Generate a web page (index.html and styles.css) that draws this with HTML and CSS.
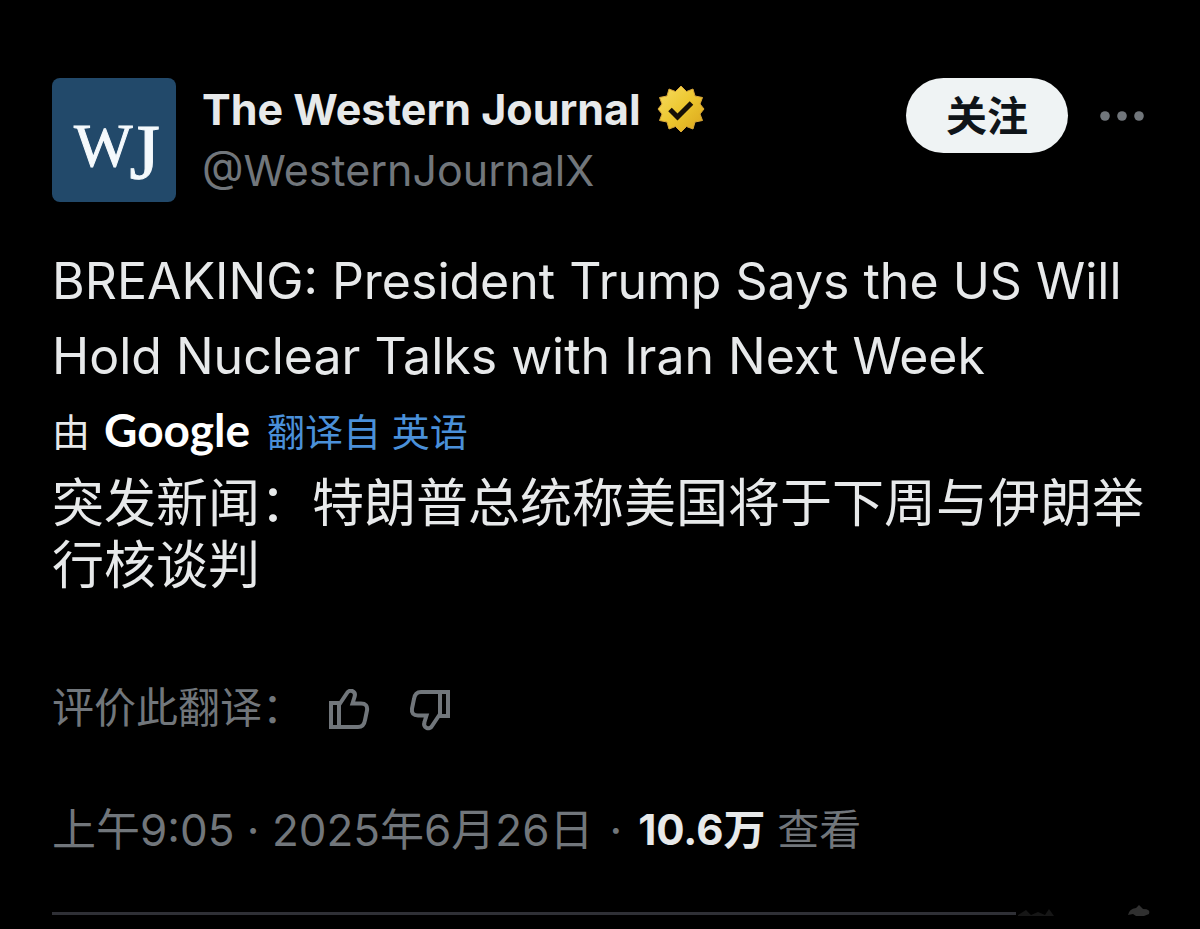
FILE: index.html
```html
<!DOCTYPE html>
<html lang="zh-CN">
<head>
<meta charset="utf-8">
<meta name="viewport" content="width=device-width, initial-scale=1">
<title>The Western Journal</title>
<link rel="stylesheet" href="styles.css">
</head>
<body>
<main class="post">
  <header class="header">
    <svg class="avatar" viewBox="0 0 124 124" role="img" aria-label="The Western Journal">
      <text class="avatar-w" x="22" y="88">W<tspan class="avatar-j" dx="-3" dy="12">J</tspan></text>
    </svg>
    <div class="author">
      <div class="name-row">
        <span class="name">The Western Journal</span>
        <svg class="badge" viewBox="0 0 48 48" role="img" aria-label="已认证">
          <defs><linearGradient id="gold" x1="0" y1="0" x2="1" y2="1"><stop offset="0" stop-color="#f6dc62"/><stop offset=".5" stop-color="#edc72f"/><stop offset="1" stop-color="#d9a41b"/></linearGradient></defs>
          <path fill="url(#gold)" stroke="#d8a63a" stroke-width="1" stroke-linejoin="round" d="M24 1L29.500 6.500L36 4L38 11L45.500 12.500L43 19L47 24L43 29L45.500 35.500L38 37L36 44L29.500 41.500L24 47L18.500 41.500L12 44L10 37L2.500 35.500L5 29L1 24L5 19L2.500 12.500L10 11L12 4L18.500 6.500z"/>
          <path fill="none" stroke="#171006" stroke-width="5" d="M13 24.500l7.500 7.500L34.500 18"/>
        </svg>
      </div>
      <a class="handle" href="#">@WesternJournalX</a>
    </div>
    <button class="follow" type="button">关注</button>
    <button class="more" type="button" aria-label="更多"><svg viewBox="0 0 44 12"><circle cx="5" cy="6" r="4.800"/><circle cx="22" cy="6" r="4.800"/><circle cx="39" cy="6" r="4.800"/></svg></button>
  </header>
  <p class="text">BREAKING: President Trump Says the US Will Hold Nuclear Talks with Iran Next Week</p>
  <div class="source"><span>由</span><span class="google">Google</span><a href="#">翻译自 英语</a></div>
  <p class="translation">突发新闻：特朗普总统称美国将于下周与伊朗举行核谈判</p>
  <div class="rate">
    <span>评价此翻译：</span>
    <button type="button" aria-label="赞"><svg viewBox="0 0 42 42"><path d="M3 14h8v24H3zM11 16L19 4C21.500-.5 28.500 2 26.500 8l-2 6.500H33q7 0 6 7l-2 9.500q-1 7-7 7H11"/></svg></button>
    <button type="button" aria-label="踩"><svg viewBox="0 0 42 42"><path d="M40 27h-8V3h8zM32 25l-8 12c-2.500 4.500-9.500 2-7.500-4l2-6.500H10q-7 0-6-7l2-9.500q1-7 7-7h19"/></svg></button>
  </div>
  <footer class="meta"><a href="#"><time datetime="2025-06-26T09:05">上午9:05 · 2025年6月26日</time></a><span>·</span><span class="views"><strong>10.6万</strong> 查看</span></footer>
  <div class="end">
    <hr>
    <svg class="smudge" viewBox="0 0 140 30" aria-hidden="true"><path fill="#161616" d="M2 17l8-5 5 5 7-3 7 3 4-6 5 7H2z"/><path fill="#303030" d="M112 17q1-6 8-7l3-3 4 4q8 0 6 5l-5 2h-8l-3-2z"/></svg>
  </div>
</main>
</body>
</html>
```
FILE: styles.css
```css
* { box-sizing: border-box; }
body {
  margin: 0;
  background: #000;
  color: #e7e9ea;
  font-family: Inter, "Noto Sans CJK SC", sans-serif;
}
a { color: inherit; text-decoration: none; }
p { margin: 0; }
button { padding: 0; border: 0; background: none; font: inherit; cursor: pointer; }
svg { display: block; }
.post { padding: 78px 52px 0; }
.header { display: flex; align-items: flex-start; }
.avatar {
  width: 124px;
  height: 124px;
  border-radius: 8px;
  background: #22496a;
  fill: #f4f9fc;
  stroke: #f4f9fc;
  stroke-width: 1;
}
.avatar-w { font: 62px "Liberation Serif", serif; }
.avatar-j { font-size: 78px; }
.author { flex: 1; margin-left: 26px; }
.name-row { display: flex; align-items: center; gap: 16px; height: 62px; }
.name { font-size: 43px; font-weight: 700; }
.badge { width: 48px; height: 48px; }
.handle { display: block; color: #71767b; font-size: 43px; line-height: 60px; }
.follow {
  width: 162px;
  height: 75px;
  border-radius: 40px;
  background: #eff3f4;
  color: #0f1419;
  font-size: 41px;
  font-weight: 700;
  line-height: 64px;
}
.more { width: 44px; margin: 32px 4px 0 32px; }
.more svg { fill: #71767b; }
.text { margin-top: 42px; font-size: 50px; line-height: 75px; }
.source { display: flex; align-items: center; height: 70px; font-size: 38px; }
.source a { color: #4a90d9; }
.google { margin: 0 17px 0 14px; color: #fff; font-family: Lato, sans-serif; font-size: 46px; font-weight: 700; }
.translation { margin-top: 9px; font-size: 52px; line-height: 62px; }
.rate { display: flex; align-items: center; margin-top: 79px; color: #71767b; font-size: 42px; line-height: 64px; }
.rate button { width: 42px; margin: 4px 0 0 24px; }
.rate button + button { margin-left: 38px; }
.rate svg { fill: none; stroke: #71767b; stroke-width: 4; }
.meta {
  display: flex;
  gap: 16px;
  margin-top: 58px;
  color: #71767b;
  font-size: 44px;
  line-height: 64px;
}
.views { font-size: 42px; }
.views strong { color: #e7e9ea; }
.end { display: flex; align-items: center; margin: 36px -8px 0 0; }
.end hr { flex: 1; height: 3px; margin: 0; border: 0; background: #2f3036; }
.smudge { width: 140px; height: 30px; }
```
